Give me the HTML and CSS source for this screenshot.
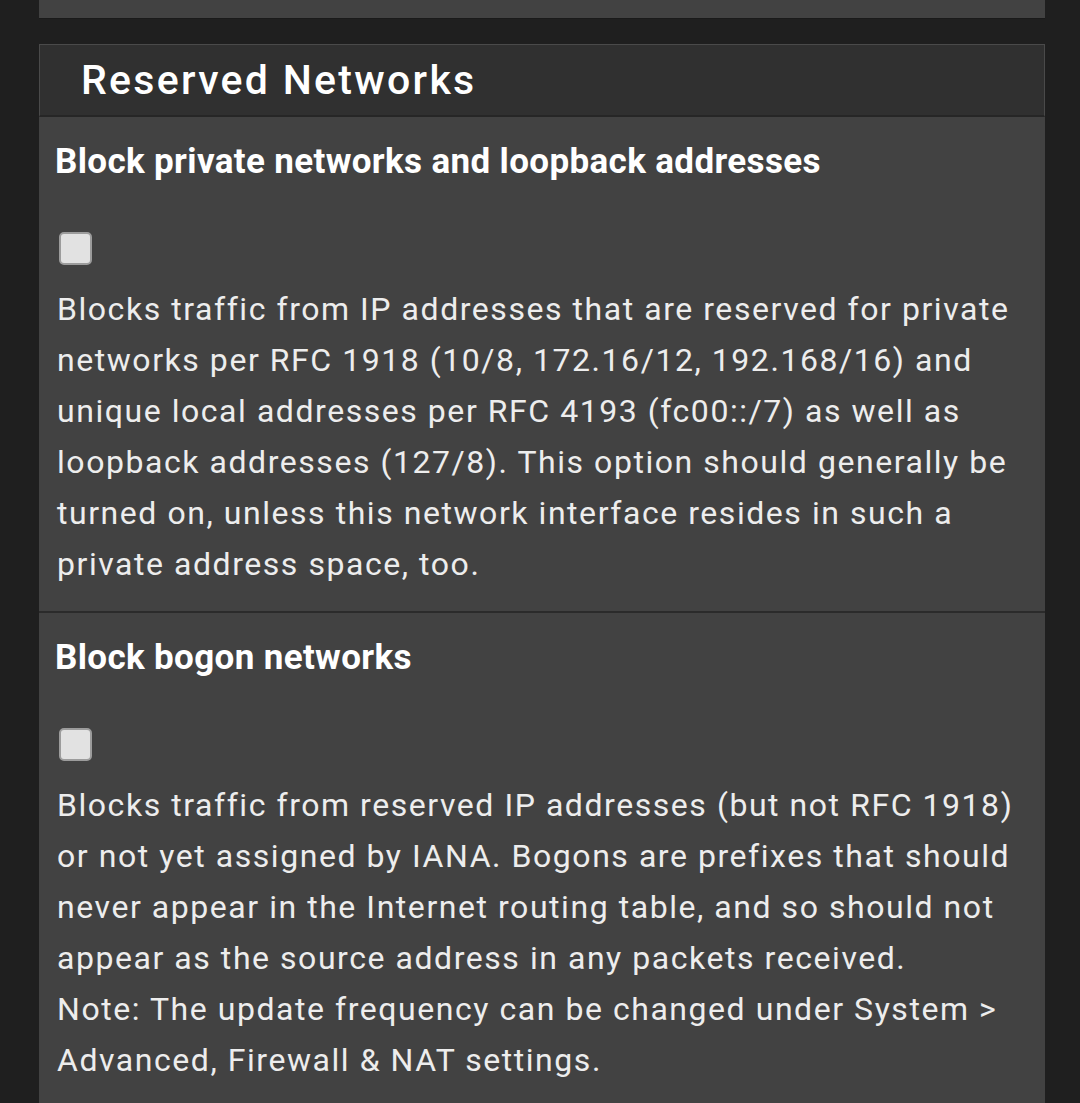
FILE: index.html
```html
<!DOCTYPE html>
<html lang="en">
<head>
    <meta charset="UTF-8">
    <meta name="viewport" content="width=device-width, initial-scale=1.0">
    <title>Firewall - Interfaces</title>
    <link rel="stylesheet" href="styles.css">
</head>
<body>
    <div class="page">
        <!-- tail of the panel above -->
        <div class="panel-prev"></div>

        <div class="panel">
            <div class="panel-heading">
                <h2>Reserved Networks</h2>
            </div>

            <div class="form-row">
                <label class="row-label" for="blockpriv">Block private networks and loopback addresses</label>
                <input type="checkbox" id="blockpriv" class="check">
                <p class="help">Blocks traffic from IP addresses that are reserved for private networks per RFC 1918 (10/8, 172.16/12, 192.168/16) and unique local addresses per RFC 4193 (fc00::/7) as well as loopback addresses (127/8). This option should generally be turned on, unless this network interface resides in such a private address space, too.</p>
            </div>

            <div class="form-row">
                <label class="row-label" for="blockbogons">Block bogon networks</label>
                <input type="checkbox" id="blockbogons" class="check">
                <p class="help">Blocks traffic from reserved IP addresses (but not RFC 1918) or not yet assigned by IANA. Bogons are prefixes that should never appear in the Internet routing table, and so should not appear as the source address in any packets received.<br>Note: The update frequency can be changed under System &gt; Advanced, Firewall &amp; NAT settings.</p>
            </div>
        </div>
    </div>
</body>
</html>
```
FILE: styles.css
```css
body {
    font-family: Roboto, "Noto Sans", sans-serif;
    background-color: #1f1f1f;
    margin: 0;
    color: #eeeeee;
}
.page {
    width: 1006px;
    margin-left: 39px;
}
.panel-prev {
    height: 18px;
    background: #424242;
    border-bottom: 1px solid #1a1a1a;
}
.panel {
    margin-top: 25px;
    background: #424242;
}
.panel-heading {
    background: #303030;
    border: 1px solid #4a4a4a;
    border-bottom: 2px solid #262626;
    height: 70px;
    display: flex;
    align-items: center;
    padding-left: 41px;
}
.panel-heading h2 {
    margin: 0;
    font-size: 41px;
    font-weight: 500;
    letter-spacing: 2.3px;
    color: #ffffff;
}
.form-row {
    padding: 25px 26px 21px 16px;
    border-bottom: 2px solid #2b2b2b;
}
.row-label {
    display: block;
    font-size: 35px;
    line-height: 40px;
    font-weight: 700;
    letter-spacing: 0.35px;
    color: #ffffff;
}
.check {
    appearance: none;
    display: block;
    width: 33px;
    height: 33px;
    margin: 50px 0 19px 4px;
    background: #e2e2e2;
    border: 2px solid #9c9c9c;
    border-radius: 5px;
    box-sizing: border-box;
}
.help {
    margin: 0 0 0 2px;
    font-size: 32px;
    line-height: 51px;
    letter-spacing: 1.55px;
    color: #ededed;
}
```
